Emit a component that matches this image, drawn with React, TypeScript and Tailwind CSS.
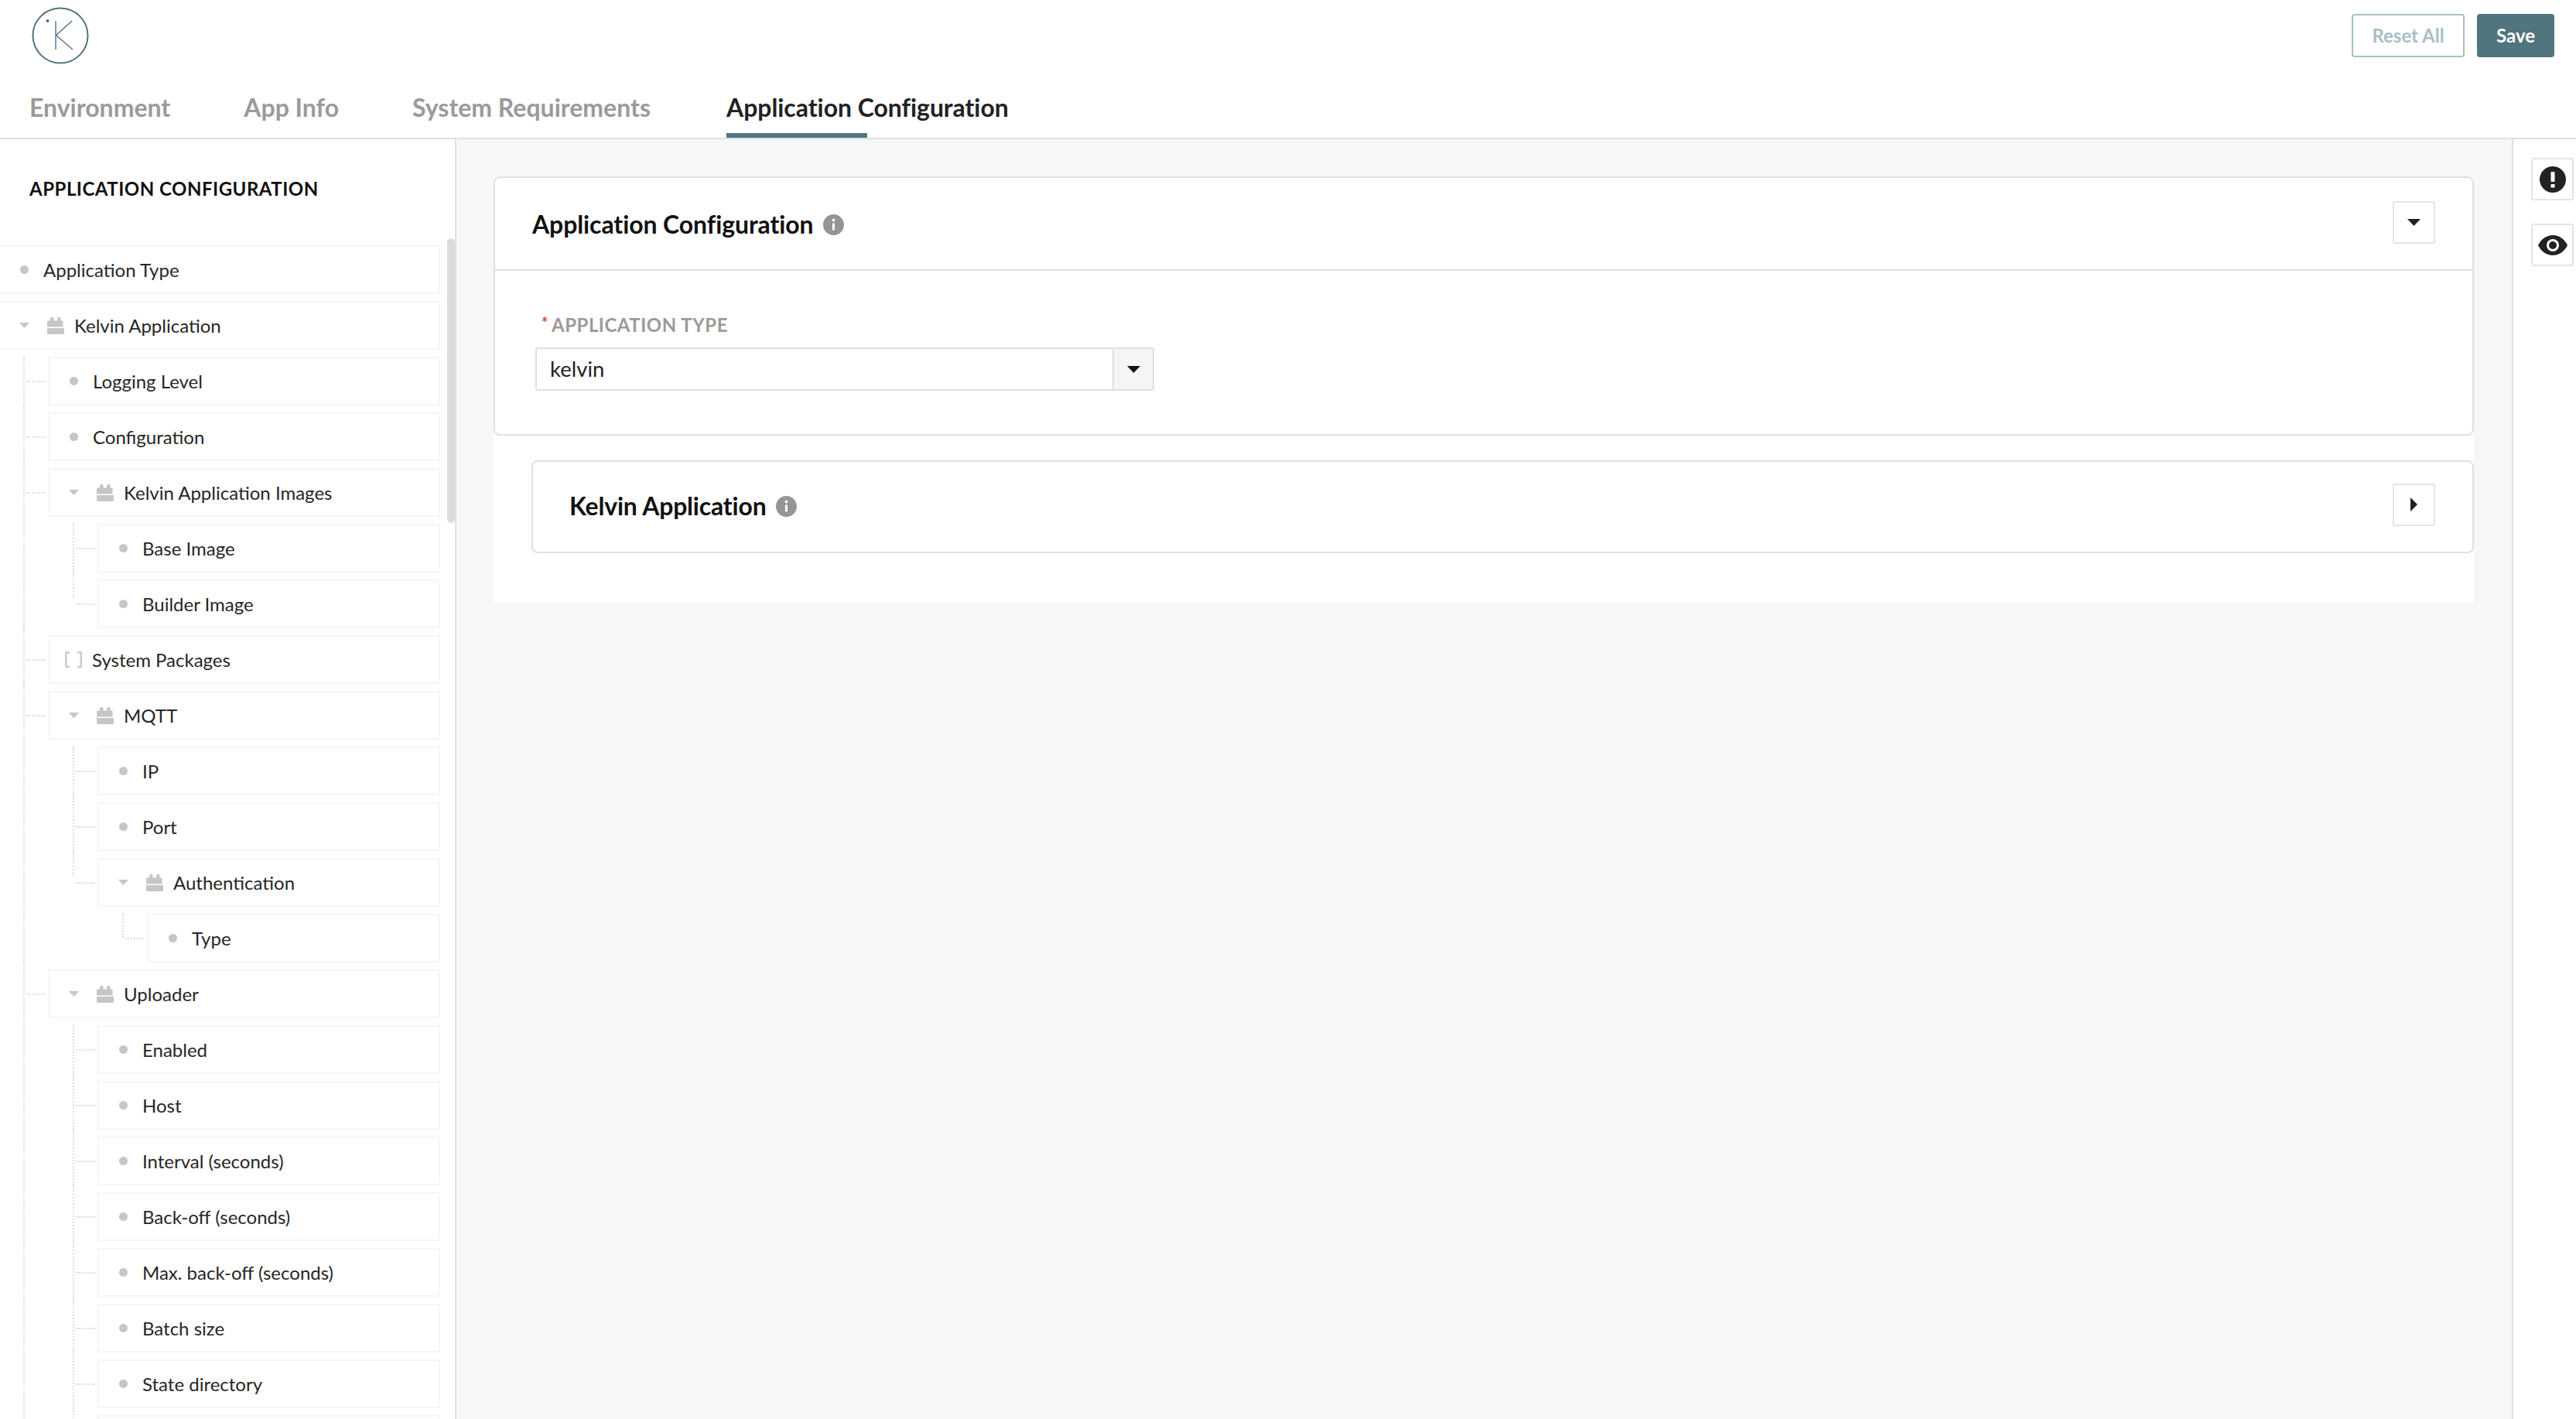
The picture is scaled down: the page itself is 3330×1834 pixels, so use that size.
import React from "react";

type TreeNode = { label: string; kind?: "array"; children?: TreeNode[] };

const tree: TreeNode[] = [
  { label: "Application Type" },
  {
    label: "Kelvin Application",
    children: [
      { label: "Logging Level" },
      { label: "Configuration" },
      {
        label: "Kelvin Application Images",
        children: [{ label: "Base Image" }, { label: "Builder Image" }],
      },
      { label: "System Packages", kind: "array" },
      {
        label: "MQTT",
        children: [
          { label: "IP" },
          { label: "Port" },
          { label: "Authentication", children: [{ label: "Type" }] },
        ],
      },
      {
        label: "Uploader",
        children: [
          { label: "Enabled" },
          { label: "Host" },
          { label: "Interval (seconds)" },
          { label: "Back-off (seconds)" },
          { label: "Max. back-off (seconds)" },
          { label: "Batch size" },
          { label: "State directory" },
          { label: "" },
        ],
      },
      // more rows sit below the fold, so the guide line keeps running
      { label: "" },
    ],
  },
];

const Logo = () => (
  <svg width="76" height="76" viewBox="0 0 76 76" fill="none" stroke="#50757e">
    <circle cx="38" cy="38" r="35.5" strokeWidth="2" />
    <circle cx="21.5" cy="19" r="2" fill="#50757e" stroke="none" />
    <path d="M32 19V56M53 19L32.5 37.5L54 56" strokeWidth="1.4" />
  </svg>
);

const BlockIcon = () => (
  <svg width="22" height="22" viewBox="0 0 22 22" fill="#c6c6c6" className="shrink-0">
    <path d="M0 5.5a1 1 0 0 1 1-1h3V1.5a1.5 1.5 0 0 1 1.5-1.5h1.5a1.5 1.5 0 0 1 1.5 1.5v3h4.5V1.5a1.5 1.5 0 0 1 1.5-1.5h1.5a1.5 1.5 0 0 1 1.5 1.5v3h2a1 1 0 0 1 1 1v7H0z" />
    <path d="M0 14h22v6.5a1.5 1.5 0 0 1-1.5 1.5h-19a1.5 1.5 0 0 1-1.5-1.5z" />
  </svg>
);

const BracketIcon = () => (
  <svg width="22" height="21" viewBox="0 0 22 21" fill="none" stroke="#cccccc" strokeWidth="2.6" className="shrink-0">
    <path d="M6 1.3H1.3V19.7H6M16 1.3H20.7V19.7H16" />
  </svg>
);

const InfoIcon = () => (
  <svg width="27" height="27" viewBox="0 0 27 27" className="shrink-0">
    <circle cx="13.5" cy="13.5" r="13.5" fill="#959595" />
    <rect x="12" y="11.5" width="3" height="9" fill="#fff" />
    <circle cx="13.5" cy="7.5" r="1.9" fill="#fff" />
  </svg>
);

const Caret = ({ color = "#222" }: { color?: string }) => (
  <svg width="17" height="9" viewBox="0 0 17 9" fill={color}>
    <path d="M0 0H17L8.5 9Z" />
  </svg>
);

const SquareButton = ({
  children,
  className = "",
}: {
  children: React.ReactNode;
  className?: string;
}) => (
  <button
    className={
      "flex h-[55px] w-[55px] items-center justify-center rounded-[3px] border-2 border-[#e4e4e4] bg-white " +
      className
    }
  >
    {children}
  </button>
);

const Node = ({
  node,
  level,
  first,
  last,
}: {
  node: TreeNode;
  level: number;
  first: boolean;
  last: boolean;
}) => (
  <div className={level === 0 ? "relative mt-[9px] -ml-[2px]" : "relative mt-[9px]"}>
    {level > 0 && (
      <>
        <span
          className={
            (first ? "-top-[1px] " : "-top-[9px] ") +
            (last ? "h-[32px] " : "bottom-0 ") +
            "absolute -left-[32px] border-l-2 border-dotted border-[#dedede]"
          }
        />
        <span className="absolute -left-[28px] top-[31px] w-[24px] border-t-2 border-dotted border-[#dedede]" />
      </>
    )}
    <div className="flex h-[63px] items-center border-2 border-[#f6f6f6] bg-white text-[24px] text-[#262626]">
      {node.children ? (
        <>
          <span className="ml-[25px] flex w-[13px] justify-center">
            <svg width="13" height="7" viewBox="0 0 13 7" fill="#c6c6c6">
              <path d="M0 0H13L6.5 7Z" />
            </svg>
          </span>
          <span className="ml-[23px] mr-[13px]">
            <BlockIcon />
          </span>
        </>
      ) : node.kind === "array" ? (
        <span className="ml-[20px] mr-[13px]">
          <BracketIcon />
        </span>
      ) : node.label ? (
        <span className="ml-[26px] mr-[19px] h-[11px] w-[11px] rounded-full bg-[#c6c6c6]" />
      ) : null}
      {node.label}
    </div>
    {node.children && (
      <div className="pl-[64px]">
        {node.children.map((child, i) => (
          <Node
            key={child.label + i}
            node={child}
            level={level + 1}
            first={i === 0}
            last={i === node.children!.length - 1}
          />
        ))}
      </div>
    )}
  </div>
);

export default function App() {
  const tabs = ["Environment", "App Info", "System Requirements"];

  return (
    <div className="flex h-[1834px] w-[3330px] flex-col overflow-hidden bg-white font-['Lato',sans-serif]">
      <header className="h-[180px] shrink-0 border-b-2 border-[#e0e0e0]">
        <div className="flex h-[92px] items-start justify-between pl-[40px] pr-[28px]">
          <div className="pt-[8px]">
            <Logo />
          </div>
          <div className="flex gap-[16px] pt-[18px]">
            <button className="h-[56px] w-[146px] rounded-[4px] border-2 border-[#a8bfc4] text-[24px] font-bold text-[#a8bfc4]">
              Reset All
            </button>
            <button className="h-[56px] w-[100px] rounded-[4px] bg-[#50757e] text-[24px] font-bold text-white">
              Save
            </button>
          </div>
        </div>
        <nav className="flex h-[86px] items-start gap-[95px] pl-[38px] text-[32px] font-bold">
          {tabs.map((tab) => (
            <span key={tab} className="pt-[27px] leading-[40px] text-[#9a9a9a]">
              {tab}
            </span>
          ))}
          <span className="relative ml-[3px] h-full pt-[27px] leading-[40px] tracking-[-0.05px] text-[#222]">
            Application Configuration
            <span className="absolute bottom-0 left-0 h-[6px] w-[182px] bg-[#50757e]" />
          </span>
        </nav>
      </header>

      <div className="flex min-h-0 flex-1">
        <aside className="relative w-[590px] shrink-0 overflow-hidden border-r-2 border-[#e0e0e0] pr-[19px]">
          <h2 className="pl-[38px] pt-[49px] text-[24px] font-bold uppercase leading-[30px] tracking-[0.5px] text-[#111]">
            Application Configuration
          </h2>
          <div className="mt-[58px]">
            {tree.map((node, i) => (
              <Node
                key={node.label}
                node={node}
                level={0}
                first={i === 0}
                last={i === tree.length - 1}
              />
            ))}
          </div>
          <div className="absolute right-0 top-[128px] h-[368px] w-[10px] rounded-[5px] bg-[#dcdcdc]" />
        </aside>

        <main className="min-w-0 flex-1 bg-[#f6f7f9] pl-[48px] pr-[49px] pt-[48px]">
          <div className="bg-white pb-[64px]">
            <section className="rounded-[8px] border-2 border-[#e0e0e0]">
              <div className="flex h-[120px] items-center justify-between border-b-2 border-[#e0e0e0] pl-[48px] pr-[48px]">
                <div className="mt-[2px] flex items-center gap-[12px] text-[32px] font-bold tracking-[-0.1px] text-[#111]">
                  Application Configuration
                  <InfoIcon />
                </div>
                <SquareButton className="mb-[3px]">
                  <Caret />
                </SquareButton>
              </div>
              <div className="pl-[52px] pt-[57px] pb-[56px]">
                <label className="ml-[8px] flex h-[26px] items-center text-[24px] font-bold uppercase leading-none tracking-[0.5px] text-[#9a9a9a]">
                  <span className="mr-[4px] self-start text-[20px] text-[#d9492a]">*</span>
                  Application Type
                </label>
                <div className="mt-[16px] flex h-[56px] w-[800px] rounded-[3px] border-2 border-[#e0e0e0]">
                  <div className="flex flex-1 items-center pl-[17px] text-[27.5px] text-[#222]">kelvin</div>
                  <div className="flex w-[52px] items-center justify-center border-l-2 border-[#e0e0e0] bg-[#f5f5f5]">
                    <Caret color="#111" />
                  </div>
                </div>
              </div>
            </section>
            <section className="ml-[49px] mt-[32px] flex h-[120px] items-center justify-between rounded-[8px] border-2 border-[#e0e0e0] pb-[2px] pl-[47px] pr-[48px]">
              <div className="flex items-center gap-[12px] text-[32px] font-bold tracking-[-0.2px] text-[#111]">
                Kelvin Application
                <InfoIcon />
              </div>
              <SquareButton className="mb-[4px]">
                <svg width="9" height="18" viewBox="0 0 9 18" fill="#222">
                  <path d="M0 0L9 9L0 18Z" />
                </svg>
              </SquareButton>
            </section>
          </div>
        </main>

        <aside className="flex w-[83px] shrink-0 flex-col items-end gap-[30px] border-l-2 border-[#e0e0e0] pr-[3px] pt-[24px]">
          <SquareButton>
            <svg width="34" height="34" viewBox="0 0 34 34">
              <circle cx="17" cy="17" r="17" fill="#222" />
              <rect x="14.5" y="7" width="5" height="13" rx="1" fill="#fff" />
              <rect x="14.5" y="23" width="5" height="4.5" fill="#fff" />
            </svg>
          </SquareButton>
          <SquareButton>
            <svg width="38" height="26" viewBox="0 0 38 26">
              <path d="M0 13C4 5 11 0 19 0s15 5 19 13c-4 8-11 13-19 13S4 21 0 13Z" fill="#222" />
              <circle cx="19" cy="13" r="8" fill="#fff" />
              <circle cx="19" cy="13" r="5" fill="#222" />
            </svg>
          </SquareButton>
        </aside>
      </div>
    </div>
  );
}
